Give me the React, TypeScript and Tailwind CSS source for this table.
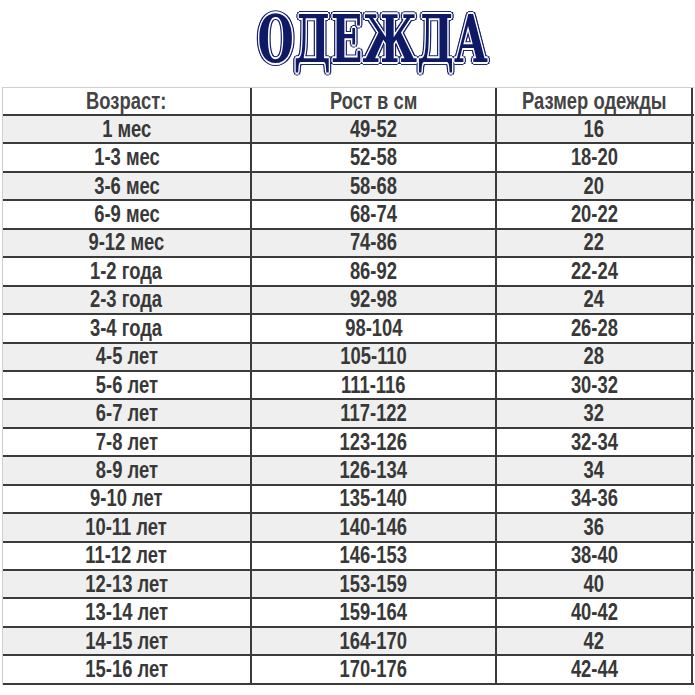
const rows: [string, string, string][] = [
  ["1 мес", "49-52", "16"],
  ["1-3 мес", "52-58", "18-20"],
  ["3-6 мес", "58-68", "20"],
  ["6-9 мес", "68-74", "20-22"],
  ["9-12 мес", "74-86", "22"],
  ["1-2 года", "86-92", "22-24"],
  ["2-3 года", "92-98", "24"],
  ["3-4 года", "98-104", "26-28"],
  ["4-5 лет", "105-110", "28"],
  ["5-6 лет", "111-116", "30-32"],
  ["6-7 лет", "117-122", "32"],
  ["7-8 лет", "123-126", "32-34"],
  ["8-9 лет", "126-134", "34"],
  ["9-10 лет", "135-140", "34-36"],
  ["10-11 лет", "140-146", "36"],
  ["11-12 лет", "146-153", "38-40"],
  ["12-13 лет", "153-159", "40"],
  ["13-14 лет", "159-164", "40-42"],
  ["14-15 лет", "164-170", "42"],
  ["15-16 лет", "170-176", "42-44"],
];

function Row({ cells, shaded, header }: { cells: [string, string, string]; shaded?: boolean; header?: boolean }) {
  return (
    <div
      className={`grid grid-cols-[249px_245px_196px] border-b-2 border-[#3b3b3b] ${header ? "h-[28px] text-[#444]" : "h-[28.45px]"} ${shaded ? "bg-[#efefef]" : "bg-white"}`}
    >
      {cells.map((c, i) => (
        <div
          key={i}
          className="flex items-center justify-center border-r-2 border-[#3b3b3b] leading-none"
        >
          <span className="inline-block scale-x-[0.8] whitespace-nowrap">{c}</span>
        </div>
      ))}
    </div>
  );
}

export default function App() {
  return (
    <div className="w-[695px] h-[695px] bg-white overflow-hidden font-['Liberation_Sans',Arial,sans-serif]">
      {/* Title */}
      <div className="h-[87px] flex items-start justify-center pl-[50px] pt-[6px]">
        <span className="inline-block font-['DejaVu_Serif',serif] font-black text-[66px] leading-none text-[#0f1a66] scale-x-[0.63] [text-shadow:1px_1px_0_#fff,-1px_-1px_0_#fff,1px_-1px_0_#fff,-1px_1px_0_#fff,2px_0_0_#fff,-2px_0_0_#fff,0_2px_0_#fff,0_-2px_0_#fff,4px_0_0_#1c2470,-4px_0_0_#1c2470,0_3px_0_#1c2470,0_-3px_0_#1c2470,3px_2px_0_#1c2470,-3px_-2px_0_#1c2470,3px_-2px_0_#1c2470,-3px_2px_0_#1c2470]">
          ОДЕЖДА
        </span>
      </div>

      {/* Table */}
      <div className="ml-[2px] w-[692px] border-l border-t border-[#cfcfcf] text-[23px] font-bold text-[#383838]">
        <Row header cells={["Возраст:", "Рост в см", "Размер одежды"]} />
        {rows.map((r, i) => (
          <Row key={i} cells={r} shaded={i % 2 === 0} />
        ))}
      </div>
    </div>
  );
}
